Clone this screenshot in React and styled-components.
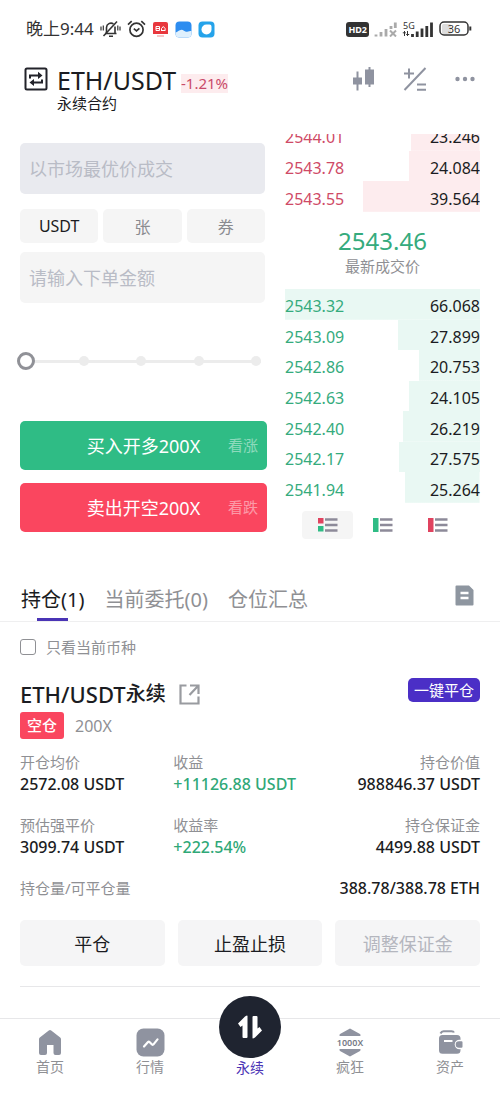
import { useState } from "react";
import styled, { createGlobalStyle } from "styled-components";

const GlobalStyle = createGlobalStyle`
  * {
    box-sizing: border-box;
  }

  body {
    margin: 0;
    background: #fff;
    color: #1b1c22;
    font-family: "Noto Sans", "Noto Sans CJK SC", sans-serif;
  }

  button, input {
    font-family: inherit;
  }

  button {
    border: 0;
    padding: 0;
    background: none;
    cursor: pointer;
  }
`;

const Page = styled.div`
  min-height: 100vh;
  display: flex;
  flex-direction: column;
`;

const Main = styled.main`
  flex: 1;
`;

/* status bar */

const StatusBar = styled.div`
  display: flex;
  align-items: center;
  justify-content: space-between;
  height: 58px;
  padding: 0 28px 0 26px;
`;

const StatusGroup = styled.div`
  display: flex;
  align-items: center;
  gap: ${(props) => props.$gap}px;
`;

const Clock = styled.span`
  font-size: 17px;
  line-height: 24px;
  color: #333;
`;

/* header */

const Header = styled.header`
  display: flex;
  align-items: flex-start;
  justify-content: space-between;
  height: 76px;
  padding: 8px 25px 0 24px;
`;

const Pair = styled.div`
  display: flex;
  align-items: flex-start;
  gap: 9px;
`;

const PairTop = styled.div`
  display: flex;
  align-items: center;
  gap: 5px;
`;

const PairName = styled.h1`
  margin: 0;
  font-size: 25px;
  font-weight: 400;
  line-height: 28px;
`;

const Change = styled.span`
  margin-top: 6px;
  font-size: 15px;
  line-height: 19px;
  color: #c94b69;
  background: #fdecee;
`;

const PairKind = styled.div`
  font-size: 15px;
  line-height: 18px;
`;

const IconButton = styled.button`
  display: flex;
  align-items: center;
  justify-content: center;
  height: 26px;
`;

const HeaderIcons = styled.div`
  display: flex;
  gap: 28px;
`;

/* trade area */

const Trade = styled.section`
  display: grid;
  grid-template-columns: 247fr 195fr;
  gap: 18px;
  padding: 0 20px;
`;

const OrderForm = styled.form`
  display: flex;
  flex-direction: column;
  min-width: 0;
  padding-top: 9px;
`;

const Field = styled.input`
  height: 51px;
  margin-right: 2px;
  padding: 0 9px;
  border: 0;
  border-radius: 5px;
  background: ${(props) => (props.disabled ? "#e9eaef" : "#f5f5f5")};
  font-size: 18px;
  min-width: 0;

  &::placeholder {
    color: #b9bcc6;
    opacity: 1;
  }
`;

const Units = styled.div`
  display: grid;
  grid-template-columns: repeat(3, 1fr);
  gap: 5px;
  margin: 15px 2px 9px 0;
`;

const Unit = styled.button`
  height: 34px;
  border-radius: 5px;
  background: #f5f5f5;
  font-size: 16px;
  color: ${(props) => (props.$active ? "#1b1c22" : "#8a8b90")};
`;

const SliderBox = styled.div`
  display: grid;
  align-items: center;
  height: 20px;
  margin: 48px 2px 50px -3px;
`;

const Marks = styled.div`
  grid-area: 1 / 1;
  display: flex;
  align-items: center;
  justify-content: space-between;
  margin: 0 4px;
  background: linear-gradient(#ececec, #ececec) center / 100% 3px no-repeat;
`;

const Mark = styled.span`
  width: 10px;
  height: 10px;
  border-radius: 50%;
  background: #ececec;
`;

const Range = styled.input`
  grid-area: 1 / 1;
  width: 100%;
  margin: 0;
  appearance: none;
  background: transparent;

  &::-webkit-slider-thumb {
    appearance: none;
    width: 18px;
    height: 18px;
    border: 3px solid #909197;
    border-radius: 50%;
    background: #fff;
  }
`;

const SubmitButton = styled.button`
  display: grid;
  grid-template-columns: 1fr auto 1fr;
  align-items: center;
  height: 49px;
  margin-bottom: 13px;
  padding: 0 9px 2px;
  border-radius: 5px;
  color: #fff;
  font-size: 18px;
  background: ${(props) => (props.$side === "buy" ? "#2fbc85" : "#fa465f")};
`;

const SubmitText = styled.span`
  grid-column: 2;
`;

const SubmitHint = styled.span`
  justify-self: end;
  font-size: 15px;
  opacity: 0.45;
`;

/* order book */

const Book = styled.div`
  min-width: 0;
`;

const AsksClip = styled.div`
  display: flex;
  flex-direction: column;
  justify-content: flex-end;
  height: 78px;
  overflow: hidden;
`;

const BookTable = styled.table`
  width: 100%;
  height: ${(props) => props.$height}px;
  flex-shrink: 0;
  border-collapse: collapse;
  font-size: 16px;
  line-height: 20px;
`;

const BookRow = styled.tr`
  background-position: right;
  background-repeat: no-repeat;
  background-image: ${(props) =>
    props.$side === "ask"
      ? "linear-gradient(#fdecee, #fdecee)"
      : "linear-gradient(#e9f8f3, #e9f8f3)"};
`;

const PriceCell = styled.td`
  padding: 4px 0 0;
  color: ${(props) => (props.$side === "ask" ? "#cf4a66" : "#35ab7d")};
`;

const AmountCell = styled.td`
  padding: 4px 0 0;
  text-align: right;
`;

const LastPrice = styled.div`
  padding: 14px 0 12px;
  text-align: center;
`;

const LastValue = styled.div`
  font-size: 24px;
  line-height: 30px;
  color: #35ab7d;
`;

const LastLabel = styled.div`
  font-size: 15px;
  line-height: 21px;
  color: #8f9094;
`;

const DepthModes = styled.div`
  display: flex;
  justify-content: center;
  gap: 4px;
  margin-top: 8px;
`;

const DepthButton = styled.button`
  display: flex;
  align-items: center;
  justify-content: center;
  width: 51px;
  height: 28px;
  border-radius: 4px;
  background: ${(props) => (props.$active ? "#f5f5f5" : "transparent")};
`;

/* positions */

const TabBar = styled.div`
  display: flex;
  align-items: flex-start;
  justify-content: space-between;
  margin-top: 33px;
  padding: 0 26px 0 21px;
  border-bottom: 1px solid #efeff0;
`;

const Tabs = styled.div`
  display: flex;
  gap: 20px;
`;

const Tab = styled.button`
  display: flex;
  flex-direction: column;
  align-items: center;
  height: 43px;
  padding-top: 7px;
  font-size: 20px;
  line-height: 30px;
  color: ${(props) => (props.$active ? "#1b1c22" : "#8f9094")};

  &::after {
    content: "";
    width: 31px;
    height: 3px;
    margin-top: 3px;
    background: ${(props) => (props.$active ? "#4a34b5" : "transparent")};
  }
`;

const RecordButton = styled(IconButton)`
  height: 34px;
`;

const Filter = styled.label`
  display: flex;
  align-items: center;
  gap: 10px;
  margin: 14px 20px 0;
  font-size: 15px;
  line-height: 22px;
  color: #8f9094;
`;

const Checkbox = styled.input`
  appearance: none;
  width: 16px;
  height: 16px;
  margin: 0;
  border: 1px solid #8f9094;
  border-radius: 3px;
  background: #fff;

  &:checked {
    background: #4a34b5;
  }
`;

const Position = styled.section`
  margin: 20px 20px 0;
  padding-bottom: 20px;
  border-bottom: 1px solid #e7e7e9;
`;

const PositionHead = styled.div`
  display: flex;
  align-items: flex-start;
  justify-content: space-between;
  height: 32px;
`;

const PositionTitle = styled.h2`
  display: flex;
  align-items: center;
  margin: 0;
  font-size: 20px;
  font-weight: 500;
  line-height: 32px;
`;

const Symbol = styled.span`
  font-size: 22px;
`;

const OpenLink = styled.a`
  display: flex;
  margin-left: 13px;
`;

const CloseAll = styled.button`
  height: 24px;
  padding: 0 6px;
  border-radius: 5px;
  background: #4b2fc6;
  color: #fff;
  font-size: 15px;
  line-height: 22px;
`;

const Tags = styled.div`
  display: flex;
  align-items: center;
  gap: 11px;
  margin-top: 2px;
`;

const SideTag = styled.span`
  padding: 0 7px;
  border-radius: 3px;
  background: #fa465f;
  color: #fff;
  font-size: 15px;
  font-weight: 500;
  line-height: 27px;
`;

const Leverage = styled.span`
  font-size: 16px;
  line-height: 22px;
  color: #8f9094;
`;

const Stats = styled.dl`
  display: grid;
  grid-template-columns: 1fr 1fr 1fr;
  row-gap: 18px;
  margin: 12px 0 0;
`;

const Stat = styled.div`
  text-align: ${(props) => props.$align || "left"};
  white-space: nowrap;
`;

const StatLabel = styled.dt`
  font-size: 15px;
  line-height: 22px;
  color: #8f9094;
`;

const StatValue = styled.dd`
  margin: 0;
  font-size: 16px;
  font-weight: 500;
  line-height: 23px;
  color: ${(props) => (props.$up ? "#2fa877" : "#1b1c22")};
`;

const WideStat = styled.div`
  grid-column: 1 / -1;
  display: flex;
  justify-content: space-between;
`;

const Actions = styled.div`
  display: grid;
  grid-template-columns: repeat(3, 1fr);
  gap: 13px;
  margin-top: 20px;
`;

const Action = styled.button`
  height: 46px;
  border-radius: 5px;
  background: #f5f5f6;
  font-size: 18px;
  color: ${(props) => (props.disabled ? "#b4b6be" : "#1b1c22")};
`;

/* bottom navigation */

const NavBar = styled.nav`
  display: grid;
  grid-template-columns: repeat(5, 1fr);
  height: 79px;
  margin-top: 31px;
  border-top: 1px solid #e7e7e9;
`;

const NavItem = styled.a`
  display: flex;
  flex-direction: column;
  align-items: center;
  padding-top: 8px;
  font-size: 14px;
  line-height: 20px;
  text-decoration: none;
  color: ${(props) => (props.$active ? "#4a34b5" : "#8f9094")};
`;

const NavIcon = styled.span`
  display: flex;
  align-items: center;
  justify-content: center;
  height: 30px;
`;

const NavCircle = styled.span`
  display: flex;
  align-items: center;
  justify-content: center;
  flex-shrink: 0;
  width: 62px;
  height: 62px;
  margin-top: -31px;
  border-radius: 50%;
  background: #1f2430;
`;

const asks = [
  ["2544.01", "23.246"],
  ["2543.78", "24.084"],
  ["2543.55", "39.564"],
];

const bids = [
  ["2543.32", "66.068"],
  ["2543.09", "27.899"],
  ["2542.86", "20.753"],
  ["2542.63", "24.105"],
  ["2542.40", "26.219"],
  ["2542.17", "27.575"],
  ["2541.94", "25.264"],
];

const maxAmount = Math.max(...[...asks, ...bids].map((row) => Number(row[1])));

const stats = [
  { label: "开仓均价", value: "2572.08 USDT" },
  { label: "收益", value: "+11126.88 USDT", up: true },
  { label: "持仓价值", value: "988846.37 USDT", align: "right" },
  { label: "预估强平价", value: "3099.74 USDT" },
  { label: "收益率", value: "+222.54%", up: true },
  { label: "持仓保证金", value: "4499.88 USDT", align: "right" },
];

const GREY = "#8f93a0";

function MuteIcon() {
  return (
    <svg width="21" height="18" viewBox="0 0 21 18" fill="none" stroke="#333" strokeWidth="1.6">
      <path d="M5 13.5h11.5M6.5 13V7.5a4.5 4.5 0 0 1 7-3.6M15 6.5V13M9 16.3h4" />
      <path d="M3.5 16 17 1.5" />
      <path d="M1 6.5v4M3.3 5.5v5M20 6.5v4M17.8 5.5v5" strokeWidth="1.2" />
    </svg>
  );
}

function AlarmIcon() {
  return (
    <svg width="19" height="18" viewBox="0 0 19 18" fill="none" stroke="#333" strokeWidth="1.7">
      <circle cx="9.5" cy="9.8" r="6.6" />
      <path d="M6.8 8.6l2.7 2.2 2.9-2.4M1 4.6 4.7 1.2M18 4.6l-3.7-3.4" />
    </svg>
  );
}

function NewsAppIcon() {
  return (
    <svg width="17" height="17" viewBox="0 0 17 17">
      <path d="M3 1h11a2 2 0 0 1 2 2v10H1V3a2 2 0 0 1 2-2z" fill="#e8373d" />
      <path d="M4 5.5h3.5v4H4zM4 7.5h3.5M9 9.5h4.5M9.500 9V7.500l1.800-2 1.800 2V9" stroke="#fff" fill="none" />
      <path d="M5 15h7" stroke="#ef8b8e" />
    </svg>
  );
}

function CloudAppIcon() {
  return (
    <svg width="17" height="17" viewBox="0 0 17 17">
      <rect x="0.5" y="0.5" width="16" height="16" rx="4" fill="#2d8df0" />
      <path d="M.5 11.5C2.500 11.500 4 8.800 6.500 8.800c2 0 3 1.700 4.500 1.900 1.500.2 3-1.200 5.500-.7v2.500a4 4 0 0 1-4 4h-8a4 4 0 0 1-4-4z" fill="#dff0fd" />
    </svg>
  );
}

function BrowserAppIcon() {
  return (
    <svg width="17" height="17" viewBox="0 0 17 17">
      <rect x="0.5" y="0.5" width="16" height="16" rx="4" fill="#25a3ea" />
      <path d="M8.500 3.500h3a2 2 0 0 1 2 2v3a5 5 0 1 1-5-5z" fill="#fff" />
    </svg>
  );
}

const HdBadge = styled.span`
  padding: 0 2px;
  border-radius: 3px;
  background: #333;
  color: #fff;
  font-size: 9px;
  font-weight: 700;
  line-height: 15px;
`;

function NoSignalIcon() {
  return (
    <svg width="23" height="15" viewBox="0 0 23 15" stroke="#aaa" fill="none">
      <path d="M2 14.5v-2M7 14.5V10M12 14.5V7M17 7V4M21.3 6V.5" strokeWidth="2.8" />
      <path d="M16 8.5l6 6M22 8.5l-6 6" strokeWidth="2" />
    </svg>
  );
}

function SignalIcon() {
  return (
    <svg width="32" height="22" viewBox="0 0 32 22">
      <text x="1" y="11" fontSize="9" fill="#333">5G</text>
      <path d="M2.500 13v5M5.500 13v5M.8 14.800h3M4.200 16.500h3" stroke="#333" fill="none" />
      <path d="M10.500 19v-3M15.200 19v-5.500M20 19v-8.500M24.800 19V8M29.500 19V4.500" stroke="#333" strokeWidth="2.800" />
    </svg>
  );
}

function BatteryIcon() {
  return (
    <svg width="33" height="16" viewBox="0 0 33 16">
      <rect x="3" y="3" width="9" height="10" rx="1.5" fill="#ddd" />
      <rect x="1" y="1" width="28" height="13" rx="4" fill="none" stroke="#333" strokeWidth="1.5" />
      <path d="M31.300 5.500v4" stroke="#333" strokeWidth="2" />
      <text x="15" y="11.500" fontSize="11" fill="#333" textAnchor="middle">36</text>
    </svg>
  );
}

function SwapIcon() {
  return (
    <svg width="24" height="24" viewBox="0 0 24 24" fill="none" stroke="#22232a" strokeWidth="2">
      <rect x="1.5" y="1.5" width="21" height="21" rx="1.5" />
      <path d="M6 11.500V8.500h9M18 12.500v3H9" />
      <path d="M14 4.800l4.500 3.700-4.500 3.500zM10 12l-4.500 3.500L10 19z" fill="#22232a" stroke="none" />
    </svg>
  );
}

function CandlesIcon() {
  return (
    <svg width="22" height="24" viewBox="0 0 22 24" fill={GREY}>
      <path d="M0 10.500h3.500v-6h2v6H9v7H5.500v6h-2v-6H0zM12 2.500h3.500V0h2v2.500H21v15h-3.500V20h-2v-2.500H12z" />
    </svg>
  );
}

function PercentIcon() {
  return (
    <svg width="24" height="25" viewBox="0 0 24 25" fill="none" stroke={GREY} strokeWidth="2">
      <path d="M1.500 23 22.500 1M1 6.500h10M6 1.500v10M14 17.500h9M14 22.800h9" />
    </svg>
  );
}

function DotsIcon() {
  return (
    <svg width="20" height="6" viewBox="0 0 20 6" fill={GREY}>
      <circle cx="2.5" cy="3" r="2.2" />
      <circle cx="10" cy="3" r="2.2" />
      <circle cx="17.5" cy="3" r="2.2" />
    </svg>
  );
}

function DepthIcon({ mode }) {
  return (
    <svg width="20" height="14" viewBox="0 0 20 14">
      {mode === "both" && <path d="M0 0h5.500v5.500H0z" fill="#e0435f" />}
      {mode === "both" && <path d="M0 8h5.500v5.500H0z" fill="#2fbc85" />}
      {mode === "bids" && <path d="M0 0h5.500v14H0z" fill="#2fbc85" />}
      {mode === "asks" && <path d="M0 0h5.500v14H0z" fill="#e0435f" />}
      <path d="M7 1.500h12.500M7 7h12.500M7 12.500h12.500" stroke="#8d8a99" strokeWidth="2.400" />
    </svg>
  );
}

function RecordIcon() {
  return (
    <svg width="19" height="21" viewBox="0 0 19 21">
      <path d="M1.500.5H14L18.500 5v14.500a1 1 0 0 1-1 1h-16a1 1 0 0 1-1-1v-18a1 1 0 0 1 1-1z" fill="#8e96a0" />
      <path d="M5.500 8h8M5.500 13h8" stroke="#fff" strokeWidth="2.400" />
    </svg>
  );
}

function OpenIcon() {
  return (
    <svg width="21" height="21" viewBox="0 0 21 21" fill="none" stroke="#999ba0" strokeWidth="2.200">
      <path d="M7.500 1.500h-6v18h18v-7M11 1.500h8.500V10M19 2l-8.500 9" />
    </svg>
  );
}

function HomeIcon() {
  return (
    <svg width="24" height="27" viewBox="0 0 24 27">
      <path d="M10.800 1.400a2 2 0 0 1 2.400 0l9 7.200a2 2 0 0 1 .8 1.600V24a2 2 0 0 1-2 2h-3.500a2 2 0 0 1-2-2v-8H9v8a2 2 0 0 1-2 2H3a2 2 0 0 1-2-2V10.200a2 2 0 0 1 .8-1.600z" fill={GREY} />
    </svg>
  );
}

function MarketIcon() {
  return (
    <svg width="29" height="29" viewBox="0 0 29 29">
      <rect x="0.5" y="0.5" width="28" height="28" rx="7" fill={GREY} />
      <path d="M8 18.500l4-4.500c.6-.6 1-.5 1.500 0l2.500 2.500c.6.500 1 .5 1.500-.1l4-5" fill="none" stroke="#fff" strokeWidth="2.200" strokeLinecap="round" />
    </svg>
  );
}

function TradeIcon() {
  return (
    <svg width="28" height="26" viewBox="0 0 28 26" fill="#fff">
      <path d="M11.500 2v21a1 1 0 0 1-1 1h-3a1 1 0 0 1-1-1V11.500l-2 1.500-2.500-3.500L9 2.500q2.500-1.500 2.500-.5zM16.500 24V3a1 1 0 0 1 1-1h3a1 1 0 0 1 1 1v11.500l2-1.500 2.500 3.500-7 7q-2.500 1.500-2.500.5z" />
    </svg>
  );
}

function CrazyIcon() {
  return (
    <svg width="30" height="29" viewBox="0 0 30 29" fill={GREY}>
      <path d="M15 .5 25 6q1.500 1.500 0 2H5q-1.500-.5 0-2zM15 28.500 25 23q1.500-1.500 0-2H5q-1.500.5 0 2z" />
      <text x="15" y="17.500" fontSize="9" fontWeight="600" textAnchor="middle" fill="#777b87">1000X</text>
    </svg>
  );
}

function WalletIcon() {
  return (
    <svg width="25" height="25" viewBox="0 0 25 25">
      <path d="M2.500 3.500Q3.500 1.200 5.500 1.200h8q2 0 2.500 1.300" fill="none" stroke={GREY} strokeWidth="2" />
      <path d="M4.500 5H19a3.500 3.500 0 0 1 3.500 3.500v11.700a3.500 3.500 0 0 1-3.500 3.500H4.500A3.500 3.500 0 0 1 1 20.200V8.500A3.500 3.500 0 0 1 4.500 5z" fill={GREY} />
      <path d="M6 11h8.500" stroke="#fff" strokeWidth="2" />
      <circle cx="21.500" cy="14.500" r="4.800" fill="#fff" />
      <path d="M21 11.200h2.500a1 1 0 0 1 1 1v4.600a1 1 0 0 1-1 1H21a3.300 3.300 0 0 1 0-6.600z" fill={GREY} />
    </svg>
  );
}

function BookRows({ rows, side }) {
  return (
    <tbody>
      {rows.map(([price, amount]) => (
        <BookRow
          key={price}
          $side={side}
          style={{ backgroundSize: `${(Number(amount) / maxAmount) * 100}% 100%` }}
        >
          <PriceCell $side={side}>{price}</PriceCell>
          <AmountCell>{amount}</AmountCell>
        </BookRow>
      ))}
    </tbody>
  );
}

function OrderPanel() {
  const [unit, setUnit] = useState("USDT");
  const [percent, setPercent] = useState(0);

  return (
    <OrderForm onSubmit={(e) => e.preventDefault()}>
      <Field disabled placeholder="以市场最优价成交" aria-label="价格" />
      <Units>
        {["USDT", "张", "券"].map((name) => (
          <Unit key={name} type="button" $active={unit === name} onClick={() => setUnit(name)}>
            {name}
          </Unit>
        ))}
      </Units>
      <Field placeholder="请输入下单金额" aria-label="下单金额" />
      <SliderBox>
        <Marks>
          {[0, 25, 50, 75, 100].map((mark) => (
            <Mark key={mark} />
          ))}
        </Marks>
        <Range
          type="range"
          aria-label="仓位比例"
          value={percent}
          onChange={(e) => setPercent(e.target.value)}
        />
      </SliderBox>
      <SubmitButton $side="buy">
        <SubmitText>买入开多200X</SubmitText>
        <SubmitHint>看涨</SubmitHint>
      </SubmitButton>
      <SubmitButton $side="sell">
        <SubmitText>卖出开空200X</SubmitText>
        <SubmitHint>看跌</SubmitHint>
      </SubmitButton>
    </OrderForm>
  );
}

function OrderBook() {
  const [mode, setMode] = useState("both");

  return (
    <Book>
      <AsksClip>
        <BookTable $height={92}>
          <BookRows rows={asks} side="ask" />
        </BookTable>
      </AsksClip>
      <LastPrice>
        <LastValue>2543.46</LastValue>
        <LastLabel>最新成交价</LastLabel>
      </LastPrice>
      <BookTable $height={214}>
        <BookRows rows={bids} side="bid" />
      </BookTable>
      <DepthModes>
        {["both", "bids", "asks"].map((name) => (
          <DepthButton key={name} aria-label={name} $active={mode === name} onClick={() => setMode(name)}>
            <DepthIcon mode={name} />
          </DepthButton>
        ))}
      </DepthModes>
    </Book>
  );
}

function PositionCard() {
  return (
    <Position>
      <PositionHead>
        <PositionTitle>
          <Symbol>ETH/USDT</Symbol>永续
          <OpenLink href="#chart" aria-label="图表">
            <OpenIcon />
          </OpenLink>
        </PositionTitle>
        <CloseAll>一键平仓</CloseAll>
      </PositionHead>
      <Tags>
        <SideTag>空仓</SideTag>
        <Leverage>200X</Leverage>
      </Tags>
      <Stats>
        {stats.map((item) => (
          <Stat key={item.label} $align={item.align}>
            <StatLabel>{item.label}</StatLabel>
            <StatValue $up={item.up}>{item.value}</StatValue>
          </Stat>
        ))}
        <WideStat>
          <StatLabel>持仓量/可平仓量</StatLabel>
          <StatValue>388.78/388.78 ETH</StatValue>
        </WideStat>
      </Stats>
      <Actions>
        <Action>平仓</Action>
        <Action>止盈止损</Action>
        <Action disabled>调整保证金</Action>
      </Actions>
    </Position>
  );
}

function App() {
  const [tab, setTab] = useState("持仓(1)");

  return (
    <Page>
      <GlobalStyle />
      <StatusBar>
        <StatusGroup $gap={6}>
          <Clock>晚上9:44</Clock>
          <MuteIcon />
          <AlarmIcon />
          <NewsAppIcon />
          <CloudAppIcon />
          <BrowserAppIcon />
        </StatusGroup>
        <StatusGroup $gap={5}>
          <HdBadge>HD2</HdBadge>
          <NoSignalIcon />
          <SignalIcon />
          <BatteryIcon />
        </StatusGroup>
      </StatusBar>
      <Main>
        <Header>
          <Pair>
            <IconButton aria-label="切换合约">
              <SwapIcon />
            </IconButton>
            <div>
              <PairTop>
                <PairName>ETH/USDT</PairName>
                <Change>-1.21%</Change>
              </PairTop>
              <PairKind>永续合约</PairKind>
            </div>
          </Pair>
          <HeaderIcons>
            <IconButton aria-label="K线"><CandlesIcon /></IconButton>
            <IconButton aria-label="计算器"><PercentIcon /></IconButton>
            <IconButton aria-label="更多"><DotsIcon /></IconButton>
          </HeaderIcons>
        </Header>
        <Trade>
          <OrderPanel />
          <OrderBook />
        </Trade>
        <TabBar>
          <Tabs>
            {["持仓(1)", "当前委托(0)", "仓位汇总"].map((name) => (
              <Tab key={name} $active={tab === name} onClick={() => setTab(name)}>
                {name}
              </Tab>
            ))}
          </Tabs>
          <RecordButton aria-label="历史记录"><RecordIcon /></RecordButton>
        </TabBar>
        <Filter>
          <Checkbox type="checkbox" />
          只看当前币种
        </Filter>
        <PositionCard />
      </Main>
      <NavBar>
        <NavItem href="#home">
          <NavIcon><HomeIcon /></NavIcon>
          首页
        </NavItem>
        <NavItem href="#market">
          <NavIcon><MarketIcon /></NavIcon>
          行情
        </NavItem>
        <NavItem href="#swap" $active>
          <NavCircle><TradeIcon /></NavCircle>
          永续
        </NavItem>
        <NavItem href="#crazy">
          <NavIcon><CrazyIcon /></NavIcon>
          疯狂
        </NavItem>
        <NavItem href="#assets">
          <NavIcon><WalletIcon /></NavIcon>
          资产
        </NavItem>
      </NavBar>
    </Page>
  );
}

export default App;
